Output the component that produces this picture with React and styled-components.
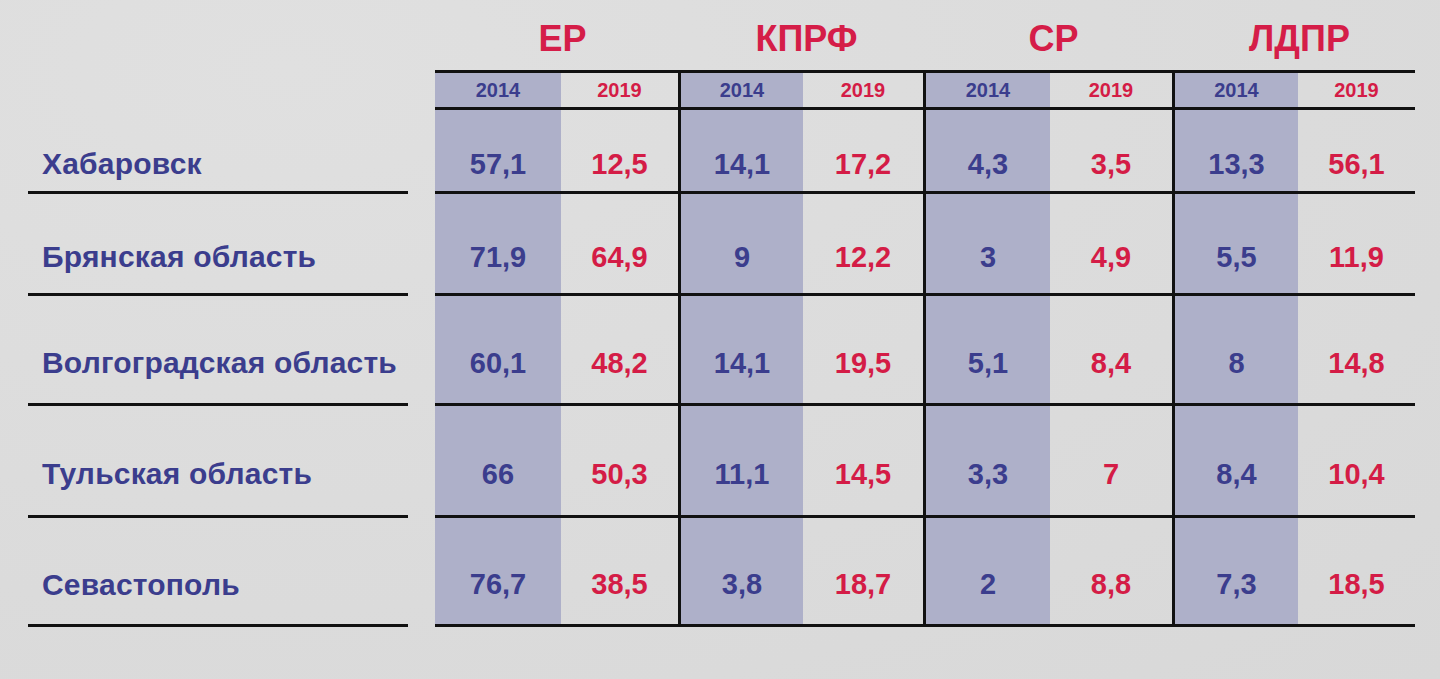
import React from 'react'
import styled, { createGlobalStyle } from 'styled-components'

const GlobalStyle = createGlobalStyle`
  html, body {
    margin: 0;
    padding: 0;
    background: #dcdcdc;
  }
  body {
    font-family: "Liberation Sans", Arial, sans-serif;
  }
`

const parties = ['ЕР', 'КПРФ', 'СР', 'ЛДПР']

const regions = [
  { name: 'Хабаровск', height: 84, values: ['57,1', '12,5', '14,1', '17,2', '4,3', '3,5', '13,3', '56,1'] },
  { name: 'Брянская область', height: 102, values: ['71,9', '64,9', '9', '12,2', '3', '4,9', '5,5', '11,9'] },
  { name: 'Волгоградская область', height: 110, values: ['60,1', '48,2', '14,1', '19,5', '5,1', '8,4', '8', '14,8'] },
  { name: 'Тульская область', height: 112, values: ['66', '50,3', '11,1', '14,5', '3,3', '7', '8,4', '10,4'] },
  { name: 'Севастополь', height: 109, values: ['76,7', '38,5', '3,8', '18,7', '2', '8,8', '7,3', '18,5'] },
]

const App = () => {
  return (
    <Page>
      <GlobalStyle />
      <TitleRow>
        <span />
        {parties.map((p) => (
          <PartyTitle key={p}>{p}</PartyTitle>
        ))}
      </TitleRow>

      <HeaderRow>
        <span />
        {parties.map((p, i) => (
          <React.Fragment key={p}>
            <YearCell old divider={i > 0}>2014</YearCell>
            <YearCell>2019</YearCell>
          </React.Fragment>
        ))}
      </HeaderRow>

      {regions.map((r) => (
        <DataRow key={r.name} $h={r.height}>
          <LabelCell>
            <Label>{r.name}</Label>
          </LabelCell>
          {r.values.map((v, i) => (
            <ValueCell key={i} old={i % 2 === 0} divider={i % 2 === 0 && i > 0}>
              {v}
            </ValueCell>
          ))}
        </DataRow>
      ))}
    </Page>
  )
}

const Page = styled.div`
  width: 1440px;
  height: 679px;
  overflow: hidden;
  background: radial-gradient(ellipse at 20% 10%, #e0e0e0 0%, #dcdcdc 50%, #d8d8d8 100%);
`

const grid = `
  display: grid;
  grid-template-columns: 435px 126px 117px 125px 120px 127px 122px 126px 117px;
`

const TitleRow = styled.div`
  ${grid}
  height: 70px;
`

const PartyTitle = styled.div`
  grid-column: span 2;
  padding: 21px 0 0 12px;
  text-align: center;
  font-size: 36px;
  line-height: 36px;
  font-weight: bold;
  color: #d51d48;
`

const HeaderRow = styled.div`
  ${grid}
  height: 40px;
`

const Cell = styled.div`
  box-sizing: border-box;
  display: flex;
  align-items: center;
  justify-content: center;
  font-weight: bold;
  color: ${({ old }) => (old ? '#3b3d8d' : '#d41c46')};
  background: ${({ old }) => (old ? '#aeb0c9' : 'transparent')};
  border-left: ${({ divider }) => (divider ? '3px solid #111' : 'none')};
  border-bottom: 3px solid #111;
`

const YearCell = styled(Cell)`
  border-top: 3px solid #111;
  font-size: 20px;
`

const DataRow = styled.div`
  ${grid}
  height: ${({ $h }) => $h}px;
`

const ValueCell = styled(Cell)`
  font-size: 29px;
  padding-top: 27px;
`

const LabelCell = styled.div`
  display: flex;
  padding: 0 27px 0 28px;
`

const Label = styled.div`
  flex: 1;
  display: flex;
  align-items: center;
  padding: 27px 0 0 14px;
  border-bottom: 3px solid #111;
  font-size: 30px;
  letter-spacing: 0.2px;
  font-weight: bold;
  color: #3b3d8d;
  white-space: nowrap;
`

export default App
